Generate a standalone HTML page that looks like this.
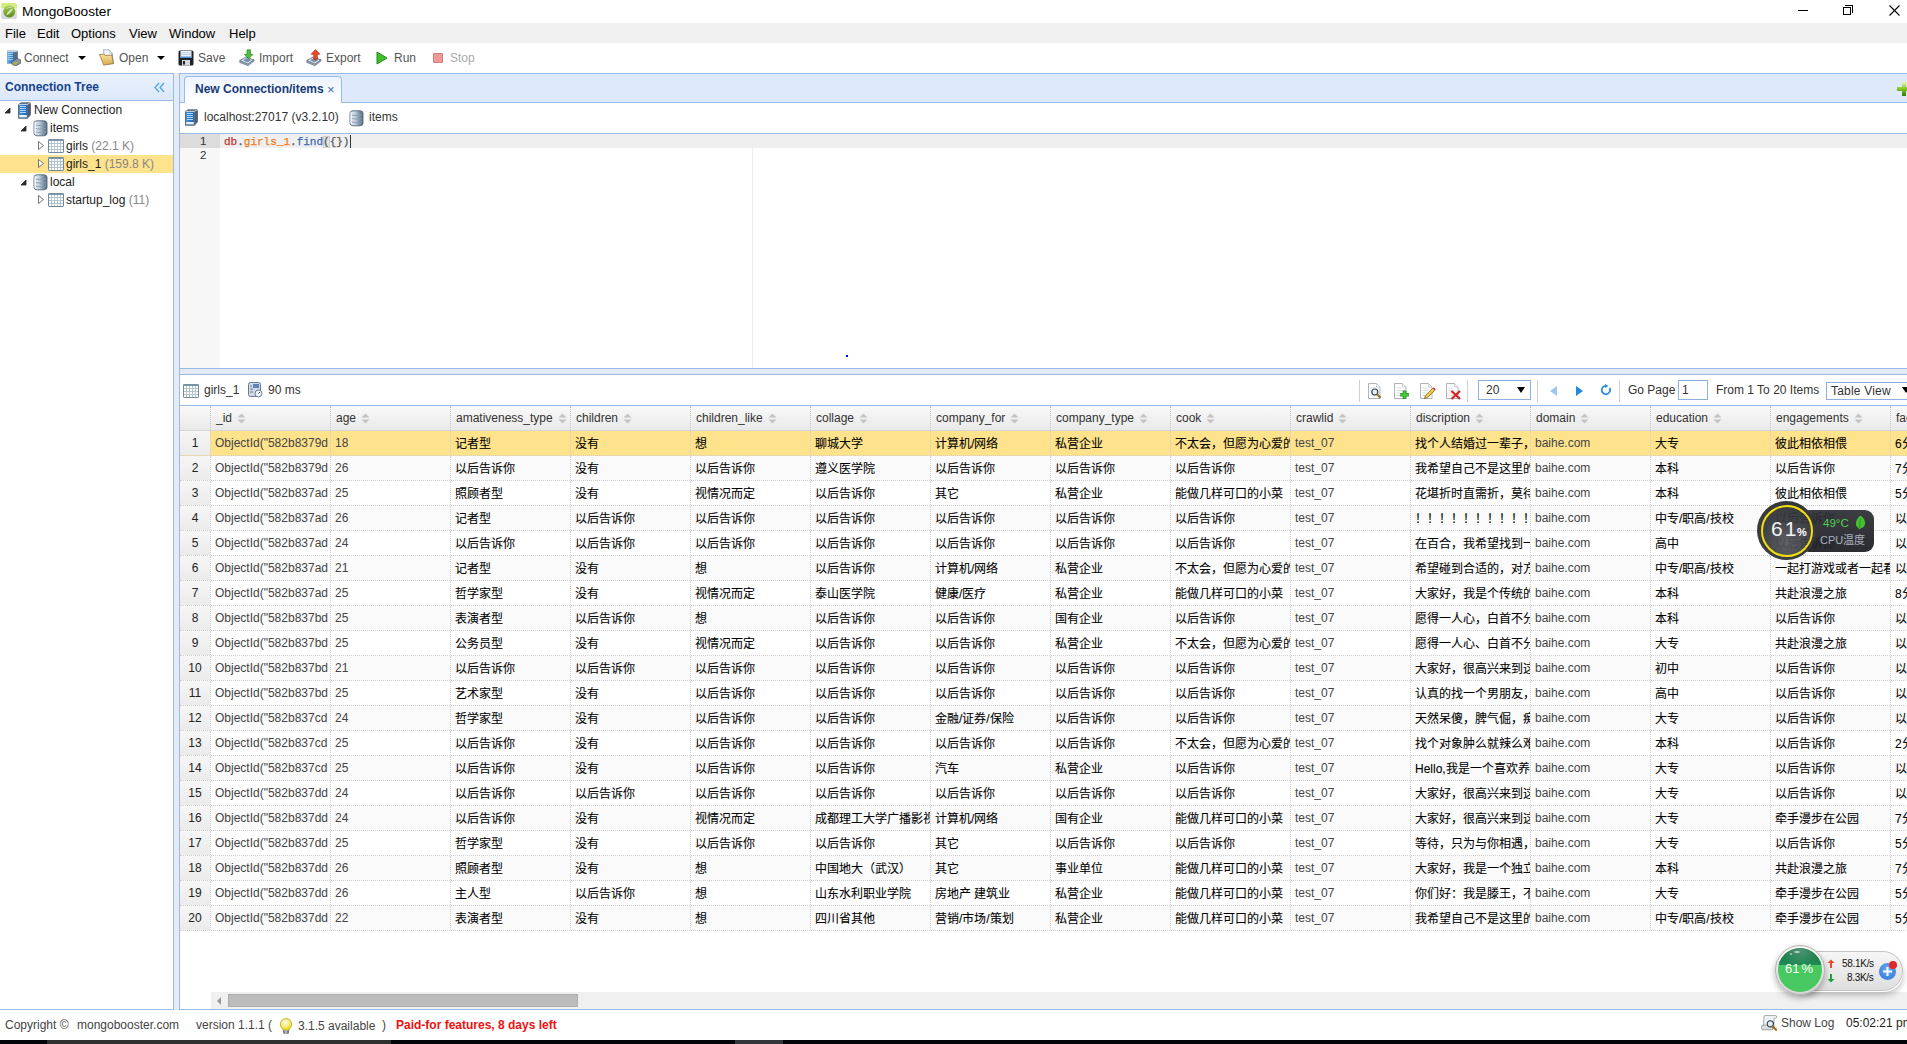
<!DOCTYPE html>
<html lang="zh-CN"><head><meta charset="utf-8"><style>
*{box-sizing:border-box}
html,body{margin:0;padding:0}
body{width:1907px;height:1044px;overflow:hidden;position:relative;background:#fff;font-family:"Liberation Sans",sans-serif;font-size:12px;color:#333}
.a{position:absolute}
.t{position:absolute;white-space:nowrap;line-height:14px}
/* title */
#title{left:0;top:0;width:1907px;height:23px;background:#fff}
#menu{left:0;top:23px;width:1907px;height:20px;background:#f0f0f0}
#menu .t{font-size:13px;color:#000;top:4px}
#tool{left:0;top:43px;width:1907px;height:30px;background:#fff}
#tool .t{top:8px;color:#555}
/* left panel */
#lp{left:0;top:73px;width:174px;height:937px;border-top:1px solid #99bbe8;border-right:1px solid #99bbe8;border-bottom:1px solid #99bbe8;background:#fff}
#lph{left:0;top:0;width:173px;height:27px;background:linear-gradient(#eaf1fc,#dde8f9);border-bottom:1px solid #99bbe8}
#split1{left:174px;top:73px;width:5px;height:937px;background:#e4ebf5}
#rp{left:179px;top:73px;width:1728px;height:937px;border-top:1px solid #99bbe8;border-left:1px solid #99bbe8;border-bottom:1px solid #99bbe8;background:#fff}
.tree .t{color:#222}
.gray{color:#888}
/* tab bar */
#tabbar{left:0;top:0;width:1728px;height:29px;background:#deeafb;border-bottom:1px solid #99bbe8}
#tab{left:4px;top:2px;width:158px;height:27px;border:1px solid #99bbe8;border-bottom:none;border-radius:4px 4px 0 0;background:linear-gradient(#eef4fd,#fff)}
#info{left:0;top:29px;width:1728px;height:31px;border-bottom:1px solid #99bbe8;background:#fff}
#editor{left:0;top:60px;width:1728px;height:235px;background:#fff;border-bottom:1px solid #99bbe8}
#split2{left:0;top:295px;width:1728px;height:6px;background:#e4ebf5;border-bottom:1px solid #99bbe8}
#rtool{left:0;top:301px;width:1728px;height:31px;background:#fff;border-bottom:1px solid #99bbe8}
.sep{position:absolute;top:6px;width:1px;height:22px;background:#d0d0d0}
/* grid */
#grid{position:absolute;left:0;top:332px;width:1728px;height:500px}
.hdr{position:absolute;left:0;top:0;width:1728px;height:25px;background:linear-gradient(#f9f9f9,#e9e9e9);border-bottom:1px solid #d5d5d5}
.hrn{position:absolute;left:0;top:0;width:30px;height:24px}
.hc{position:absolute;top:0;width:120px;height:24px;border-left:1px dotted #c5c5c5}
.ht{position:absolute;left:5px;top:5px;color:#333;line-height:14px;white-space:nowrap}
.sa{position:absolute;top:7px;width:9px;height:11px}
.row{position:absolute;left:0;width:1728px;height:25px;background:#fff;border-bottom:1px dotted #cfcfcf}
.row.alt{background:#fafafa}
.row.sel{background:#fee28c}
.rn{position:absolute;left:0;top:0;width:30px;height:24px;background:linear-gradient(#f6f6f6,#ebebeb);text-align:center;line-height:25px;color:#222}
.c{position:absolute;top:0;width:120px;height:24px;overflow:hidden;white-space:nowrap;padding-left:4px;line-height:24px;border-left:1px dotted #cfcfcf;color:#444}
.c.z{color:#000;-webkit-text-stroke:0.08px #000;line-height:26px}
#hscroll{left:31px;top:918px;width:1697px;height:17px;background:#f0f0f0}
#status{left:0;top:1010px;width:1907px;height:30px;background:#fff}
#status .t{top:8px;color:#444}
#taskbar{left:0;top:1040px;width:1907px;height:4px;background:#02040a}

</style></head><body>
<div id="title" class="a">
  <svg class="a" style="left:1px;top:3px" width="17" height="17" viewBox="0 0 17 17"><defs><linearGradient id="gi0" x1="0" y1="0" x2="0" y2="1"><stop offset="0" stop-color="#fafafa"/><stop offset="1" stop-color="#d4d4d8"/></linearGradient><linearGradient id="gi1" x1="0" y1="0" x2="0" y2="1"><stop offset="0" stop-color="#a8d050"/><stop offset="1" stop-color="#5a8a1e"/></linearGradient></defs><rect x="0" y="0" width="16" height="16" rx="2.5" fill="url(#gi0)"/><path d="M0 2.5Q0 0 2.5 0h11Q16 0 16 2.5V5H0z" fill="#d2ec84"/><circle cx="8.3" cy="8.5" r="6" fill="url(#gi1)"/><path d="M5 12.5L6.5 9.5Q9 6 12 5.5Q11 8.5 8 11z" fill="#e6f2d0" opacity="0.85"/><path d="M5.5 5.5q2-1.5 5-1" stroke="#e6f2d0" stroke-width="0.6" fill="none"/></svg>
  <div class="t" style="left:22px;top:5px;font-size:13.7px;color:#000">MongoBooster</div>
  <div class="a" style="left:1798px;top:10px;width:10px;height:1px;background:#000"></div>
  <div class="a" style="left:1843px;top:7px;width:8px;height:8px;border:1px solid #000"></div>
  <div class="a" style="left:1845px;top:5px;width:8px;height:8px;border-top:1px solid #000;border-right:1px solid #000"></div>
  <svg class="a" style="left:1889px;top:5px" width="11" height="11" viewBox="0 0 11 11"><path d="M0.5 0.5L10.5 10.5M10.5 0.5L0.5 10.5" stroke="#000" stroke-width="1.1"/></svg>
</div>
<div id="menu" class="a">
  <div class="t" style="left:5px">File</div>
  <div class="t" style="left:37px">Edit</div>
  <div class="t" style="left:71px">Options</div>
  <div class="t" style="left:129px">View</div>
  <div class="t" style="left:169px">Window</div>
  <div class="t" style="left:229px">Help</div>
</div>
<div id="tool" class="a">
  <!-- connect icon -->
  <svg class="a" style="left:6px;top:6px" width="15" height="17" viewBox="0 0 15 17"><defs><linearGradient id="cg1" x1="0" x2="1"><stop offset="0" stop-color="#7fb6e8"/><stop offset="0.6" stop-color="#2f86d6"/><stop offset="1" stop-color="#3a6ea8"/></linearGradient></defs><path d="M1 2.5Q1 1 3 1h6q3 0 3 2v11.5H1z" fill="#8696a8"/><rect x="1" y="2" width="7" height="12.5" fill="url(#cg1)"/><path d="M8 2h3.5v12.5H8z" fill="#596a80"/><ellipse cx="6.3" cy="2" rx="5.3" ry="1.2" fill="#c8d2dc"/><path d="M2 4.5h5M2 6.5h5M2 8.5h5M2 10.5h5" stroke="#cfe6ff" stroke-width="0.7"/><path d="M6 12.5l5-3 4 1.5v3l-5 3-4-1.5z" fill="#8a949e" stroke="#4a525a" stroke-width="0.6"/><path d="M7 15.5l2-2.5M9 15.5l2-2.5" stroke="#e0c000" stroke-width="1"/></svg>
  <div class="t" style="left:24px">Connect</div>
  <div class="a" style="left:78px;top:13px;width:0;height:0;border-left:4px solid transparent;border-right:4px solid transparent;border-top:4px solid #000"></div>
  <!-- open icon -->
  <svg class="a" style="left:99px;top:6px" width="16" height="17" viewBox="0 0 16 17"><defs><linearGradient id="fo" x1="0" y1="0" x2="0" y2="1"><stop offset="0" stop-color="#fbe6a0"/><stop offset="1" stop-color="#d8a848"/></linearGradient></defs><path d="M4.5 0.8h5.5l3.2 3.4 1 10.5-8 0.5z" fill="#f4f8fc" stroke="#8ca4bc" stroke-width="0.8"/><path d="M10 0.8l0.5 3.6 2.7-0.2" fill="none" stroke="#a8bcd0" stroke-width="0.6"/><path d="M12.8 4.5l1.5 10.5" stroke="#6a9ad0" stroke-width="0.8"/><path d="M0.6 5.5l4.2-0.3 1.3 1.2 6.8-0.2 1.4 8.3-9.6 1.6z" fill="url(#fo)" stroke="#9a7434" stroke-width="0.8" stroke-linejoin="round"/></svg>
  <div class="t" style="left:119px">Open</div>
  <div class="a" style="left:157px;top:13px;width:0;height:0;border-left:4px solid transparent;border-right:4px solid transparent;border-top:4px solid #000"></div>
  <!-- save -->
  <svg class="a" style="left:178px;top:7px" width="16" height="16" viewBox="0 0 16 16"><rect x="0.5" y="0.5" width="15" height="15" rx="1.5" fill="#1e2226"/><rect x="2.5" y="1" width="11" height="7" fill="#f2f6fa"/><path d="M3 2.8h10M3 4.6h10" stroke="#a8c4e4" stroke-width="0.8"/><rect x="2.5" y="6.5" width="11" height="1.5" fill="#4a90d8"/><rect x="4" y="10" width="8" height="5.5" fill="#d4d8dc"/><rect x="5" y="11" width="2" height="3.5" fill="#1e2226"/></svg>
  <div class="t" style="left:198px">Save</div>
  <!-- import -->
  <svg class="a" style="left:239px;top:6px" width="16" height="18" viewBox="0 0 16 18"><path d="M0.8 11.5L7 8l8 3-6 4.5z" fill="#dfe8f0" stroke="#5a6878" stroke-width="0.8" stroke-linejoin="round"/><path d="M0.8 11.5v2l8.2 3.2 6-4.7v-1.5l-6 4.5z" fill="#9aa8b6" stroke="#5a6878" stroke-width="0.6" stroke-linejoin="round"/><path d="M4 11.3l4-2.2 4.5 1.6-3.8 2.8z" fill="#7890a8"/><path d="M8 0.8h3.5v4.5h2.5l-4.3 4.5-4.3-4.5H8z" fill="#48c040" stroke="#2a8a20" stroke-width="0.7"/></svg>
  <div class="t" style="left:259px">Import</div>
  <!-- export -->
  <svg class="a" style="left:306px;top:6px" width="16" height="18" viewBox="0 0 16 18"><path d="M0.8 11.5L7 8l8 3-6 4.5z" fill="#dfe8f0" stroke="#5a6878" stroke-width="0.8" stroke-linejoin="round"/><path d="M0.8 11.5v2l8.2 3.2 6-4.7v-1.5l-6 4.5z" fill="#9aa8b6" stroke="#5a6878" stroke-width="0.6" stroke-linejoin="round"/><path d="M4 11.3l4-2.2 4.5 1.6-3.8 2.8z" fill="#7890a8"/><path d="M9.5 0.6l4.3 4.6h-2.5v5H7.8v-5H5.2z" fill="#f04a2a" stroke="#a82010" stroke-width="0.7"/></svg>
  <div class="t" style="left:326px">Export</div>
  <!-- run -->
  <svg class="a" style="left:376px;top:8px" width="12" height="14" viewBox="0 0 12 14"><path d="M1 1L11 7L1 13Z" fill="#3fbf2a" stroke="#238a15" stroke-width="1" stroke-linejoin="round"/></svg>
  <div class="t" style="left:394px">Run</div>
  <!-- stop -->
  <div class="a" style="left:433px;top:10px;width:10px;height:10px;background:#ef9a9a;border:1px solid #d97a7a;border-radius:1px"></div>
  <div class="t" style="left:450px;color:#aaa">Stop</div>
</div>

<div id="lp" class="a">
  <div id="lph" class="a">
    <div class="t" style="left:5px;top:6px;font-weight:bold;color:#15428b">Connection Tree</div>
    <svg class="a" style="left:154px;top:8px" width="11" height="11" viewBox="0 0 11 11"><path d="M5 1L1 5.5L5 10M10 1L6 5.5L10 10" fill="none" stroke="#4aa3ea" stroke-width="1.3"/></svg>
  </div>
  <div class="tree">
    <!-- New Connection row y=101..119 -->
    <svg class="a" style="left:4px;top:33px" width="7" height="7" viewBox="0 0 7 7"><path d="M6 1L6 6L1 6Z" fill="#2a2a2a" stroke="#2a2a2a" stroke-width="0.8" stroke-linejoin="round"/></svg>
    <svg class="a" style="left:18px;top:28px" width="13" height="17" viewBox="0 0 13 17"><defs><linearGradient id="sfr" x1="0" x2="1"><stop offset="0" stop-color="#3d95e0"/><stop offset="1" stop-color="#1a64b4"/></linearGradient></defs><path d="M0.5 2.5L3 0.8h9l0.5 1.5v10.5l-3 3.5H0.5z" fill="#6c7c90" stroke="#3d4a5a" stroke-width="0.7"/><path d="M0.8 2.5h8.5l3-1.7" fill="none" stroke="#c8d0d8" stroke-width="1"/><rect x="1.2" y="3" width="7.6" height="12.3" fill="url(#sfr)"/><path d="M2 4.5h6M2 6.5h6M2 8.5h6M2 10.5h6" stroke="#a8d8ff" stroke-width="1"/><rect x="1.2" y="13" width="7.6" height="2.3" fill="#e8f0f8"/><path d="M9.5 3.2l2.5-2v11.5l-2.5 3z" fill="#4d5c70"/></svg>
    <div class="t" style="left:34px;top:29px">New Connection</div>
    <!-- items -->
    <svg class="a" style="left:20px;top:51px" width="7" height="7" viewBox="0 0 7 7"><path d="M6 1L6 6L1 6Z" fill="#2a2a2a" stroke="#2a2a2a" stroke-width="0.8" stroke-linejoin="round"/></svg>
    <svg class="a" style="left:33px;top:46px" width="15" height="17" viewBox="0 0 15 17"><defs><linearGradient id="dbg" x1="0" x2="1"><stop offset="0" stop-color="#e6f0f8"/><stop offset="0.35" stop-color="#c8d6e2"/><stop offset="0.75" stop-color="#7890a4"/><stop offset="1" stop-color="#5a6e80"/></linearGradient></defs><path d="M1 3Q1 1 4 0.8h7Q14 1 14 3v10.5q0 2-3 2.3H4q-3-0.3-3-2.3z" fill="url(#dbg)" stroke="#56687a" stroke-width="0.9"/><path d="M2 5q5 1.2 11 0M2 8.5q5 1.2 11 0M2 12q5 1.2 11 0" fill="none" stroke="#8a9cac" stroke-width="0.9"/><path d="M2.2 2.5v11" stroke="#f4f9fd" stroke-width="1.6" opacity="0.8"/></svg>
    <div class="t" style="left:50px;top:47px">items</div>
    <!-- girls -->
    <svg class="a" style="left:38px;top:67px" width="6" height="9" viewBox="0 0 6 9"><path d="M0.5 0.5L5.5 4.5L0.5 8.5Z" fill="#fff" stroke="#666" stroke-width="0.9"/></svg>
    <svg class="a" style="left:48px;top:65px" width="16" height="14" viewBox="0 0 16 14"><rect x="0" y="0" width="16" height="14" rx="1" fill="#b4c4d0"/><rect x="0.5" y="0.5" width="15" height="13" rx="1" fill="none" stroke="#71899b"/><rect x="0.5" y="0.5" width="15" height="1.5" fill="#7d95a8"/><rect x="1" y="2" width="2" height="2" fill="#fff"/><rect x="4" y="2" width="2" height="2" fill="#fff"/><rect x="7" y="2" width="2" height="2" fill="#fff"/><rect x="10" y="2" width="2" height="2" fill="#fff"/><rect x="13" y="2" width="2" height="2" fill="#fff"/><rect x="1" y="5" width="2" height="2" fill="#fff"/><rect x="4" y="5" width="2" height="2" fill="#fff"/><rect x="7" y="5" width="2" height="2" fill="#fff"/><rect x="10" y="5" width="2" height="2" fill="#fff"/><rect x="13" y="5" width="2" height="2" fill="#fff"/><rect x="1" y="8" width="2" height="2" fill="#fff"/><rect x="4" y="8" width="2" height="2" fill="#fff"/><rect x="7" y="8" width="2" height="2" fill="#fff"/><rect x="10" y="8" width="2" height="2" fill="#fff"/><rect x="13" y="8" width="2" height="2" fill="#fff"/><rect x="1" y="11" width="2" height="2" fill="#fff"/><rect x="4" y="11" width="2" height="2" fill="#fff"/><rect x="7" y="11" width="2" height="2" fill="#fff"/><rect x="10" y="11" width="2" height="2" fill="#fff"/><rect x="13" y="11" width="2" height="2" fill="#fff"/></svg>
    <div class="t" style="left:66px;top:65px">girls <span class="gray">(22.1 K)</span></div>
    <!-- girls_1 selected -->
    <div class="a" style="left:0;top:81px;width:173px;height:18px;background:#fee28c"></div>
    <svg class="a" style="left:38px;top:85px" width="6" height="9" viewBox="0 0 6 9"><path d="M0.5 0.5L5.5 4.5L0.5 8.5Z" fill="#fff" stroke="#666" stroke-width="0.9"/></svg>
    <svg class="a" style="left:48px;top:83px" width="16" height="14" viewBox="0 0 16 14"><rect x="0" y="0" width="16" height="14" rx="1" fill="#b4c4d0"/><rect x="0.5" y="0.5" width="15" height="13" rx="1" fill="none" stroke="#71899b"/><rect x="0.5" y="0.5" width="15" height="1.5" fill="#7d95a8"/><rect x="1" y="2" width="2" height="2" fill="#fff"/><rect x="4" y="2" width="2" height="2" fill="#fff"/><rect x="7" y="2" width="2" height="2" fill="#fff"/><rect x="10" y="2" width="2" height="2" fill="#fff"/><rect x="13" y="2" width="2" height="2" fill="#fff"/><rect x="1" y="5" width="2" height="2" fill="#fff"/><rect x="4" y="5" width="2" height="2" fill="#fff"/><rect x="7" y="5" width="2" height="2" fill="#fff"/><rect x="10" y="5" width="2" height="2" fill="#fff"/><rect x="13" y="5" width="2" height="2" fill="#fff"/><rect x="1" y="8" width="2" height="2" fill="#fff"/><rect x="4" y="8" width="2" height="2" fill="#fff"/><rect x="7" y="8" width="2" height="2" fill="#fff"/><rect x="10" y="8" width="2" height="2" fill="#fff"/><rect x="13" y="8" width="2" height="2" fill="#fff"/><rect x="1" y="11" width="2" height="2" fill="#fff"/><rect x="4" y="11" width="2" height="2" fill="#fff"/><rect x="7" y="11" width="2" height="2" fill="#fff"/><rect x="10" y="11" width="2" height="2" fill="#fff"/><rect x="13" y="11" width="2" height="2" fill="#fff"/></svg>
    <div class="t" style="left:66px;top:83px">girls_1 <span class="gray">(159.8 K)</span></div>
    <!-- local -->
    <svg class="a" style="left:20px;top:105px" width="7" height="7" viewBox="0 0 7 7"><path d="M6 1L6 6L1 6Z" fill="#2a2a2a" stroke="#2a2a2a" stroke-width="0.8" stroke-linejoin="round"/></svg>
    <svg class="a" style="left:33px;top:100px" width="15" height="17" viewBox="0 0 15 17"><path d="M1 3Q1 1 4 0.8h7Q14 1 14 3v10.5q0 2-3 2.3H4q-3-0.3-3-2.3z" fill="url(#dbg)" stroke="#56687a" stroke-width="0.9"/><path d="M2 5q5 1.2 11 0M2 8.5q5 1.2 11 0M2 12q5 1.2 11 0" fill="none" stroke="#8a9cac" stroke-width="0.9"/><path d="M2.2 2.5v11" stroke="#f4f9fd" stroke-width="1.6" opacity="0.8"/></svg>
    <div class="t" style="left:50px;top:101px">local</div>
    <!-- startup_log -->
    <svg class="a" style="left:38px;top:121px" width="6" height="9" viewBox="0 0 6 9"><path d="M0.5 0.5L5.5 4.5L0.5 8.5Z" fill="#fff" stroke="#666" stroke-width="0.9"/></svg>
    <svg class="a" style="left:48px;top:119px" width="16" height="14" viewBox="0 0 16 14"><rect x="0" y="0" width="16" height="14" rx="1" fill="#b4c4d0"/><rect x="0.5" y="0.5" width="15" height="13" rx="1" fill="none" stroke="#71899b"/><rect x="0.5" y="0.5" width="15" height="1.5" fill="#7d95a8"/><rect x="1" y="2" width="2" height="2" fill="#fff"/><rect x="4" y="2" width="2" height="2" fill="#fff"/><rect x="7" y="2" width="2" height="2" fill="#fff"/><rect x="10" y="2" width="2" height="2" fill="#fff"/><rect x="13" y="2" width="2" height="2" fill="#fff"/><rect x="1" y="5" width="2" height="2" fill="#fff"/><rect x="4" y="5" width="2" height="2" fill="#fff"/><rect x="7" y="5" width="2" height="2" fill="#fff"/><rect x="10" y="5" width="2" height="2" fill="#fff"/><rect x="13" y="5" width="2" height="2" fill="#fff"/><rect x="1" y="8" width="2" height="2" fill="#fff"/><rect x="4" y="8" width="2" height="2" fill="#fff"/><rect x="7" y="8" width="2" height="2" fill="#fff"/><rect x="10" y="8" width="2" height="2" fill="#fff"/><rect x="13" y="8" width="2" height="2" fill="#fff"/><rect x="1" y="11" width="2" height="2" fill="#fff"/><rect x="4" y="11" width="2" height="2" fill="#fff"/><rect x="7" y="11" width="2" height="2" fill="#fff"/><rect x="10" y="11" width="2" height="2" fill="#fff"/><rect x="13" y="11" width="2" height="2" fill="#fff"/></svg>
    <div class="t" style="left:66px;top:119px">startup_log <span class="gray">(11)</span></div>
  </div>
</div>
<div id="split1" class="a"></div>

<div id="rp" class="a">
  <div id="tabbar" class="a">
    <div id="tab" class="a">
      <div class="t" style="left:10px;top:5px;font-weight:bold;color:#163a78">New Connection/items</div>
      <div class="t" style="left:142px;top:6px;color:#3a6db0;font-size:13px">×</div>
    </div>
    <svg class="a" style="left:1717px;top:8px" width="11" height="14" viewBox="0 0 11 14"><defs><linearGradient id="pg" x1="0" y1="0" x2="0" y2="1"><stop offset="0" stop-color="#e6fca8"/><stop offset="0.45" stop-color="#8cc828"/><stop offset="1" stop-color="#2a8000"/></linearGradient></defs><path d="M5 0h4v5h2v4H9v5H5V9H0V5h5z" fill="url(#pg)"/></svg>
  </div>
  <div id="info" class="a">
    <svg class="a" style="left:5px;top:6px" width="13" height="17" viewBox="0 0 13 17"><defs><linearGradient id="sfr2" x1="0" x2="1"><stop offset="0" stop-color="#3d95e0"/><stop offset="1" stop-color="#1a64b4"/></linearGradient></defs><path d="M0.5 2.5L3 0.8h9l0.5 1.5v10.5l-3 3.5H0.5z" fill="#6c7c90" stroke="#3d4a5a" stroke-width="0.7"/><path d="M0.8 2.5h8.5l3-1.7" fill="none" stroke="#c8d0d8" stroke-width="1"/><rect x="1.2" y="3" width="7.6" height="12.3" fill="url(#sfr2)"/><path d="M2 4.5h6M2 6.5h6M2 8.5h6M2 10.5h6" stroke="#a8d8ff" stroke-width="1"/><rect x="1.2" y="13" width="7.6" height="2.3" fill="#e8f0f8"/><path d="M9.5 3.2l2.5-2v11.5l-2.5 3z" fill="#4d5c70"/></svg>
    <div class="t" style="left:24px;top:7px">localhost:27017 (v3.2.10)</div>
    <svg class="a" style="left:169px;top:7px" width="15" height="17" viewBox="0 0 15 17"><path d="M1 3Q1 1 4 0.8h7Q14 1 14 3v10.5q0 2-3 2.3H4q-3-0.3-3-2.3z" fill="url(#dbg)" stroke="#56687a" stroke-width="0.9"/><path d="M2 5q5 1.2 11 0M2 8.5q5 1.2 11 0M2 12q5 1.2 11 0" fill="none" stroke="#8a9cac" stroke-width="0.9"/><path d="M2.2 2.5v11" stroke="#f4f9fd" stroke-width="1.6" opacity="0.8"/></svg>
    <div class="t" style="left:189px;top:7px">items</div>
  </div>
  <div id="editor" class="a">
    <div class="a" style="left:0;top:0;width:40px;height:234px;background:#f7f7f7"></div>
    <div class="a" style="left:0;top:0;width:40px;height:14px;background:#dcdcdc"></div>
    <div class="a" style="left:40px;top:0;width:1688px;height:14px;background:#efefef"></div>
    <div class="a" style="left:572px;top:14px;width:1px;height:220px;background:#ececec"></div>
    <div class="t" style="left:20px;top:0;font-family:'Liberation Sans';font-size:11.5px;color:#333;line-height:14px">1</div>
    <div class="t" style="left:20px;top:14px;font-family:'Liberation Sans';font-size:11.5px;color:#333;line-height:14px">2</div>
    <div class="t" style="left:44px;top:1px;font-family:'Liberation Mono',monospace;font-size:11px;line-height:14px;color:#555;-webkit-text-stroke:0.25px currentColor"><span style="color:#c83232">db</span>.<span style="color:#ef7d1e">girls_1</span>.<span style="color:#3669b5">find</span><span style="outline:1px solid #ccc;outline-offset:-1px;background:#e4e4e4">(</span>{})</div>
    <div class="a" style="left:170px;top:1px;width:1px;height:13px;background:#333"></div>
    <div class="a" style="left:666px;top:221px;width:2px;height:2px;background:#0000ee"></div>
  </div>
  <div id="split2" class="a"></div>
  <div id="rtool" class="a">
        <svg class="a" style="left:3px;top:9px" width="16" height="14" viewBox="0 0 16 14"><rect x="0" y="0" width="16" height="14" rx="1" fill="#b4c4d0"/><rect x="0.5" y="0.5" width="15" height="13" rx="1" fill="none" stroke="#71899b"/><rect x="0.5" y="0.5" width="15" height="1.5" fill="#7d95a8"/><rect x="1" y="2" width="2" height="2" fill="#fff"/><rect x="4" y="2" width="2" height="2" fill="#fff"/><rect x="7" y="2" width="2" height="2" fill="#fff"/><rect x="10" y="2" width="2" height="2" fill="#fff"/><rect x="13" y="2" width="2" height="2" fill="#fff"/><rect x="1" y="5" width="2" height="2" fill="#fff"/><rect x="4" y="5" width="2" height="2" fill="#fff"/><rect x="7" y="5" width="2" height="2" fill="#fff"/><rect x="10" y="5" width="2" height="2" fill="#fff"/><rect x="13" y="5" width="2" height="2" fill="#fff"/><rect x="1" y="8" width="2" height="2" fill="#fff"/><rect x="4" y="8" width="2" height="2" fill="#fff"/><rect x="7" y="8" width="2" height="2" fill="#fff"/><rect x="10" y="8" width="2" height="2" fill="#fff"/><rect x="13" y="8" width="2" height="2" fill="#fff"/><rect x="1" y="11" width="2" height="2" fill="#fff"/><rect x="4" y="11" width="2" height="2" fill="#fff"/><rect x="7" y="11" width="2" height="2" fill="#fff"/><rect x="10" y="11" width="2" height="2" fill="#fff"/><rect x="13" y="11" width="2" height="2" fill="#fff"/></svg>
    <div class="t" style="left:24px;top:8px">girls_1</div>
    <svg class="a" style="left:68px;top:7px" width="15" height="16" viewBox="0 0 15 16"><rect x="0.5" y="0.5" width="12" height="14" rx="2" fill="#d0dae6" stroke="#6a7a8c"/><rect x="5" y="2" width="6" height="4" fill="#5a84b8"/><path d="M2 4h2M2 7h3M2 10h3" stroke="#6a7a8c"/><circle cx="10.5" cy="11.5" r="3.5" fill="#eef2f6" stroke="#6a7a8c"/><path d="M10.5 11.5l1.5-1.5" stroke="#333"/></svg>
    <div class="t" style="left:88px;top:8px">90 ms</div>
    <div class="sep" style="left:1179px;top:5px"></div>
    <svg class="a" style="left:1188px;top:8px" width="18" height="17" viewBox="0 0 18 17"><path d="M0.5 0.5h8l3.5 3.5v11.5H0.5z" fill="#fff" stroke="#a4acb4" stroke-width="0.9"/><path d="M8.5 0.5v3.5h3.5" fill="#f0f0f0" stroke="#b8c0c8" stroke-width="0.7"/><path d="M2.5 5h5M2.5 7.5h6M2.5 10h4M2.5 12.5h5" stroke="#d8d8d8" stroke-width="0.9"/><circle cx="6.8" cy="9" r="3" fill="#e4f0fc" stroke="#3a4048" stroke-width="1.2"/><path d="M9 11.3l3.6 3.6" stroke="#a07830" stroke-width="2.2"/></svg>
    <svg class="a" style="left:1214px;top:8px" width="18" height="17" viewBox="0 0 18 17"><path d="M0.5 0.5h8l3.5 3.5v11.5H0.5z" fill="#fff" stroke="#a4acb4" stroke-width="0.9"/><path d="M8.5 0.5v3.5h3.5" fill="#f0f0f0" stroke="#b8c0c8" stroke-width="0.7"/><path d="M2.5 5h5M2.5 7.5h6M2.5 10h4M2.5 12.5h5" stroke="#d8d8d8" stroke-width="0.9"/><path d="M10.5 7.5v8.5M6.3 11.8h8.5" stroke="#1e8a1e" stroke-width="3.6"/><path d="M10.5 8.3v7M7.1 11.8h7" stroke="#4cd03a" stroke-width="2"/></svg>
    <svg class="a" style="left:1240px;top:8px" width="18" height="17" viewBox="0 0 18 17"><path d="M0.5 0.5h8l3.5 3.5v11.5H0.5z" fill="#fff" stroke="#a4acb4" stroke-width="0.9"/><path d="M8.5 0.5v3.5h3.5" fill="#f0f0f0" stroke="#b8c0c8" stroke-width="0.7"/><path d="M2.5 5h5M2.5 7.5h6M2.5 10h4M2.5 12.5h5" stroke="#d8d8d8" stroke-width="0.9"/><path d="M4.5 15.5l0.8-2.8 7.5-7.5 2 2-7.5 7.5z" fill="#f0cc3a" stroke="#6a5210" stroke-width="0.7"/><path d="M12.8 5.2l1-1 2 2-1 1z" fill="#d83030"/></svg>
    <svg class="a" style="left:1266px;top:8px" width="18" height="17" viewBox="0 0 18 17"><path d="M0.5 0.5h8l3.5 3.5v11.5H0.5z" fill="#fff" stroke="#a4acb4" stroke-width="0.9"/><path d="M8.5 0.5v3.5h3.5" fill="#f0f0f0" stroke="#b8c0c8" stroke-width="0.7"/><path d="M2.5 5h5M2.5 7.5h6M2.5 10h4M2.5 12.5h5" stroke="#d8d8d8" stroke-width="0.9"/><path d="M5.5 8l8.5 8M14 8l-8.5 8" stroke="#d42020" stroke-width="2.2"/></svg>
    <div class="sep" style="left:1287px;top:5px"></div>
    <div class="a" style="left:1298px;top:5px;width:53px;height:20px;border:1px solid #8eb0e0;background:#fff"></div>
    <div class="t" style="left:1306px;top:8px;font-size:12px">20</div>
    <div class="a" style="left:1337px;top:12px;width:0;height:0;border-left:4px solid transparent;border-right:4px solid transparent;border-top:6px solid #000"></div>
    <div class="sep" style="left:1357px;top:5px"></div>
    <div class="a" style="left:1370px;top:11px;width:0;height:0;border-top:5px solid transparent;border-bottom:5px solid transparent;border-right:7px solid #9cc8f0"></div>
    <div class="a" style="left:1396px;top:11px;width:0;height:0;border-top:5px solid transparent;border-bottom:5px solid transparent;border-left:7px solid #1f8ae0"></div>
    <svg class="a" style="left:1420px;top:9px" width="12" height="12" viewBox="0 0 12 12"><path d="M9.6 4A4.2 4.2 0 1 1 6 1.8" fill="none" stroke="#2a8ae0" stroke-width="1.8"/><path d="M5 0l3.5 2-3.5 2z" fill="#2a8ae0"/></svg>
    <div class="sep" style="left:1439px;top:5px"></div>
    <div class="t" style="left:1448px;top:8px">Go Page</div>
    <div class="a" style="left:1498px;top:5px;width:30px;height:20px;border:1px solid #8eb0e0;background:#fff"></div>
    <div class="t" style="left:1502px;top:8px">1</div>
    <div class="t" style="left:1536px;top:8px">From 1 To 20 Items</div>
    <div class="a" style="left:1646px;top:7px;width:90px;height:18px;border:1px solid #8eb0e0;background:#fff"></div>
    <div class="t" style="left:1651px;top:9px;letter-spacing:0.2px">Table View</div>
    <div class="a" style="left:1722px;top:12px;width:0;height:0;border-left:4px solid transparent;border-right:4px solid transparent;border-top:6px solid #000"></div>
  </div>
  <div id="grid">
<div class="hdr">
<div class="hrn"></div>
<div class="hc" style="left:30px"><span class="ht">_id</span><svg class="sa" style="left:26px" width="9" height="11" viewBox="0 0 9 11"><path d="M4.5 0.5L8.5 4.5H0.5z M4.5 10.5L8.5 6.5H0.5z" fill="#c4c4c4"/></svg></div>
<div class="hc" style="left:150px"><span class="ht">age</span><svg class="sa" style="left:30px" width="9" height="11" viewBox="0 0 9 11"><path d="M4.5 0.5L8.5 4.5H0.5z M4.5 10.5L8.5 6.5H0.5z" fill="#c4c4c4"/></svg></div>
<div class="hc" style="left:270px"><span class="ht">amativeness_type</span><svg class="sa" style="left:107px" width="9" height="11" viewBox="0 0 9 11"><path d="M4.5 0.5L8.5 4.5H0.5z M4.5 10.5L8.5 6.5H0.5z" fill="#c4c4c4"/></svg></div>
<div class="hc" style="left:390px"><span class="ht">children</span><svg class="sa" style="left:52px" width="9" height="11" viewBox="0 0 9 11"><path d="M4.5 0.5L8.5 4.5H0.5z M4.5 10.5L8.5 6.5H0.5z" fill="#c4c4c4"/></svg></div>
<div class="hc" style="left:510px"><span class="ht">children_like</span><svg class="sa" style="left:77px" width="9" height="11" viewBox="0 0 9 11"><path d="M4.5 0.5L8.5 4.5H0.5z M4.5 10.5L8.5 6.5H0.5z" fill="#c4c4c4"/></svg></div>
<div class="hc" style="left:630px"><span class="ht">collage</span><svg class="sa" style="left:48px" width="9" height="11" viewBox="0 0 9 11"><path d="M4.5 0.5L8.5 4.5H0.5z M4.5 10.5L8.5 6.5H0.5z" fill="#c4c4c4"/></svg></div>
<div class="hc" style="left:750px"><span class="ht">company_for</span><svg class="sa" style="left:79px" width="9" height="11" viewBox="0 0 9 11"><path d="M4.5 0.5L8.5 4.5H0.5z M4.5 10.5L8.5 6.5H0.5z" fill="#c4c4c4"/></svg></div>
<div class="hc" style="left:870px"><span class="ht">company_type</span><svg class="sa" style="left:88px" width="9" height="11" viewBox="0 0 9 11"><path d="M4.5 0.5L8.5 4.5H0.5z M4.5 10.5L8.5 6.5H0.5z" fill="#c4c4c4"/></svg></div>
<div class="hc" style="left:990px"><span class="ht">cook</span><svg class="sa" style="left:35px" width="9" height="11" viewBox="0 0 9 11"><path d="M4.5 0.5L8.5 4.5H0.5z M4.5 10.5L8.5 6.5H0.5z" fill="#c4c4c4"/></svg></div>
<div class="hc" style="left:1110px"><span class="ht">crawlid</span><svg class="sa" style="left:47px" width="9" height="11" viewBox="0 0 9 11"><path d="M4.5 0.5L8.5 4.5H0.5z M4.5 10.5L8.5 6.5H0.5z" fill="#c4c4c4"/></svg></div>
<div class="hc" style="left:1230px"><span class="ht">discription</span><svg class="sa" style="left:64px" width="9" height="11" viewBox="0 0 9 11"><path d="M4.5 0.5L8.5 4.5H0.5z M4.5 10.5L8.5 6.5H0.5z" fill="#c4c4c4"/></svg></div>
<div class="hc" style="left:1350px"><span class="ht">domain</span><svg class="sa" style="left:49px" width="9" height="11" viewBox="0 0 9 11"><path d="M4.5 0.5L8.5 4.5H0.5z M4.5 10.5L8.5 6.5H0.5z" fill="#c4c4c4"/></svg></div>
<div class="hc" style="left:1470px"><span class="ht">education</span><svg class="sa" style="left:62px" width="9" height="11" viewBox="0 0 9 11"><path d="M4.5 0.5L8.5 4.5H0.5z M4.5 10.5L8.5 6.5H0.5z" fill="#c4c4c4"/></svg></div>
<div class="hc" style="left:1590px"><span class="ht">engagements</span><svg class="sa" style="left:83px" width="9" height="11" viewBox="0 0 9 11"><path d="M4.5 0.5L8.5 4.5H0.5z M4.5 10.5L8.5 6.5H0.5z" fill="#c4c4c4"/></svg></div>
<div class="hc" style="left:1710px"><span class="ht">face</span><svg class="sa" style="left:33px" width="9" height="11" viewBox="0 0 9 11"><path d="M4.5 0.5L8.5 4.5H0.5z M4.5 10.5L8.5 6.5H0.5z" fill="#c4c4c4"/></svg></div>
</div>
<div class="row sel" style="top:25px"><div class="rn">1</div>
<div class="c" style="left:30px">ObjectId(&quot;582b8379d</div>
<div class="c" style="left:150px">18</div>
<div class="c z" style="left:270px">记者型</div>
<div class="c z" style="left:390px">没有</div>
<div class="c z" style="left:510px">想</div>
<div class="c z" style="left:630px">聊城大学</div>
<div class="c z" style="left:750px">计算机/网络</div>
<div class="c z" style="left:870px">私营企业</div>
<div class="c z" style="left:990px">不太会，但愿为心爱的</div>
<div class="c" style="left:1110px">test_07</div>
<div class="c z" style="left:1230px">找个人结婚过一辈子，</div>
<div class="c" style="left:1350px">baihe.com</div>
<div class="c z" style="left:1470px">大专</div>
<div class="c z" style="left:1590px">彼此相依相偎</div>
<div class="c z" style="left:1710px">6分</div>
</div>
<div class="row alt" style="top:50px"><div class="rn">2</div>
<div class="c" style="left:30px">ObjectId(&quot;582b8379d</div>
<div class="c" style="left:150px">26</div>
<div class="c z" style="left:270px">以后告诉你</div>
<div class="c z" style="left:390px">没有</div>
<div class="c z" style="left:510px">以后告诉你</div>
<div class="c z" style="left:630px">遵义医学院</div>
<div class="c z" style="left:750px">以后告诉你</div>
<div class="c z" style="left:870px">以后告诉你</div>
<div class="c z" style="left:990px">以后告诉你</div>
<div class="c" style="left:1110px">test_07</div>
<div class="c z" style="left:1230px">我希望自己不是这里的</div>
<div class="c" style="left:1350px">baihe.com</div>
<div class="c z" style="left:1470px">本科</div>
<div class="c z" style="left:1590px">以后告诉你</div>
<div class="c z" style="left:1710px">7分</div>
</div>
<div class="row" style="top:75px"><div class="rn">3</div>
<div class="c" style="left:30px">ObjectId(&quot;582b837ad</div>
<div class="c" style="left:150px">25</div>
<div class="c z" style="left:270px">照顾者型</div>
<div class="c z" style="left:390px">没有</div>
<div class="c z" style="left:510px">视情况而定</div>
<div class="c z" style="left:630px">以后告诉你</div>
<div class="c z" style="left:750px">其它</div>
<div class="c z" style="left:870px">私营企业</div>
<div class="c z" style="left:990px">能做几样可口的小菜</div>
<div class="c" style="left:1110px">test_07</div>
<div class="c z" style="left:1230px">花堪折时直需折，莫待</div>
<div class="c" style="left:1350px">baihe.com</div>
<div class="c z" style="left:1470px">本科</div>
<div class="c z" style="left:1590px">彼此相依相偎</div>
<div class="c z" style="left:1710px">5分</div>
</div>
<div class="row alt" style="top:100px"><div class="rn">4</div>
<div class="c" style="left:30px">ObjectId(&quot;582b837ad</div>
<div class="c" style="left:150px">26</div>
<div class="c z" style="left:270px">记者型</div>
<div class="c z" style="left:390px">以后告诉你</div>
<div class="c z" style="left:510px">以后告诉你</div>
<div class="c z" style="left:630px">以后告诉你</div>
<div class="c z" style="left:750px">以后告诉你</div>
<div class="c z" style="left:870px">以后告诉你</div>
<div class="c z" style="left:990px">以后告诉你</div>
<div class="c" style="left:1110px">test_07</div>
<div class="c z" style="left:1230px">！！！！！！！！！！</div>
<div class="c" style="left:1350px">baihe.com</div>
<div class="c z" style="left:1470px">中专/职高/技校</div>
<div class="c z" style="left:1590px">以后告诉你</div>
<div class="c z" style="left:1710px">以</div>
</div>
<div class="row" style="top:125px"><div class="rn">5</div>
<div class="c" style="left:30px">ObjectId(&quot;582b837ad</div>
<div class="c" style="left:150px">24</div>
<div class="c z" style="left:270px">以后告诉你</div>
<div class="c z" style="left:390px">以后告诉你</div>
<div class="c z" style="left:510px">以后告诉你</div>
<div class="c z" style="left:630px">以后告诉你</div>
<div class="c z" style="left:750px">以后告诉你</div>
<div class="c z" style="left:870px">以后告诉你</div>
<div class="c z" style="left:990px">以后告诉你</div>
<div class="c" style="left:1110px">test_07</div>
<div class="c z" style="left:1230px">在百合，我希望找到一</div>
<div class="c" style="left:1350px">baihe.com</div>
<div class="c z" style="left:1470px">高中</div>
<div class="c z" style="left:1590px">以后告诉你</div>
<div class="c z" style="left:1710px">以</div>
</div>
<div class="row alt" style="top:150px"><div class="rn">6</div>
<div class="c" style="left:30px">ObjectId(&quot;582b837ad</div>
<div class="c" style="left:150px">21</div>
<div class="c z" style="left:270px">记者型</div>
<div class="c z" style="left:390px">没有</div>
<div class="c z" style="left:510px">想</div>
<div class="c z" style="left:630px">以后告诉你</div>
<div class="c z" style="left:750px">计算机/网络</div>
<div class="c z" style="left:870px">私营企业</div>
<div class="c z" style="left:990px">不太会，但愿为心爱的</div>
<div class="c" style="left:1110px">test_07</div>
<div class="c z" style="left:1230px">希望碰到合适的，对方</div>
<div class="c" style="left:1350px">baihe.com</div>
<div class="c z" style="left:1470px">中专/职高/技校</div>
<div class="c z" style="left:1590px">一起打游戏或者一起看</div>
<div class="c z" style="left:1710px">以</div>
</div>
<div class="row" style="top:175px"><div class="rn">7</div>
<div class="c" style="left:30px">ObjectId(&quot;582b837ad</div>
<div class="c" style="left:150px">25</div>
<div class="c z" style="left:270px">哲学家型</div>
<div class="c z" style="left:390px">没有</div>
<div class="c z" style="left:510px">视情况而定</div>
<div class="c z" style="left:630px">泰山医学院</div>
<div class="c z" style="left:750px">健康/医疗</div>
<div class="c z" style="left:870px">私营企业</div>
<div class="c z" style="left:990px">能做几样可口的小菜</div>
<div class="c" style="left:1110px">test_07</div>
<div class="c z" style="left:1230px">大家好，我是个传统的</div>
<div class="c" style="left:1350px">baihe.com</div>
<div class="c z" style="left:1470px">本科</div>
<div class="c z" style="left:1590px">共赴浪漫之旅</div>
<div class="c z" style="left:1710px">8分</div>
</div>
<div class="row alt" style="top:200px"><div class="rn">8</div>
<div class="c" style="left:30px">ObjectId(&quot;582b837bd</div>
<div class="c" style="left:150px">25</div>
<div class="c z" style="left:270px">表演者型</div>
<div class="c z" style="left:390px">以后告诉你</div>
<div class="c z" style="left:510px">想</div>
<div class="c z" style="left:630px">以后告诉你</div>
<div class="c z" style="left:750px">以后告诉你</div>
<div class="c z" style="left:870px">国有企业</div>
<div class="c z" style="left:990px">以后告诉你</div>
<div class="c" style="left:1110px">test_07</div>
<div class="c z" style="left:1230px">愿得一人心，白首不分</div>
<div class="c" style="left:1350px">baihe.com</div>
<div class="c z" style="left:1470px">本科</div>
<div class="c z" style="left:1590px">以后告诉你</div>
<div class="c z" style="left:1710px">以</div>
</div>
<div class="row" style="top:225px"><div class="rn">9</div>
<div class="c" style="left:30px">ObjectId(&quot;582b837bd</div>
<div class="c" style="left:150px">25</div>
<div class="c z" style="left:270px">公务员型</div>
<div class="c z" style="left:390px">没有</div>
<div class="c z" style="left:510px">视情况而定</div>
<div class="c z" style="left:630px">以后告诉你</div>
<div class="c z" style="left:750px">以后告诉你</div>
<div class="c z" style="left:870px">私营企业</div>
<div class="c z" style="left:990px">不太会，但愿为心爱的</div>
<div class="c" style="left:1110px">test_07</div>
<div class="c z" style="left:1230px">愿得一人心、白首不分</div>
<div class="c" style="left:1350px">baihe.com</div>
<div class="c z" style="left:1470px">大专</div>
<div class="c z" style="left:1590px">共赴浪漫之旅</div>
<div class="c z" style="left:1710px">以</div>
</div>
<div class="row alt" style="top:250px"><div class="rn">10</div>
<div class="c" style="left:30px">ObjectId(&quot;582b837bd</div>
<div class="c" style="left:150px">21</div>
<div class="c z" style="left:270px">以后告诉你</div>
<div class="c z" style="left:390px">以后告诉你</div>
<div class="c z" style="left:510px">以后告诉你</div>
<div class="c z" style="left:630px">以后告诉你</div>
<div class="c z" style="left:750px">以后告诉你</div>
<div class="c z" style="left:870px">以后告诉你</div>
<div class="c z" style="left:990px">以后告诉你</div>
<div class="c" style="left:1110px">test_07</div>
<div class="c z" style="left:1230px">大家好，很高兴来到这</div>
<div class="c" style="left:1350px">baihe.com</div>
<div class="c z" style="left:1470px">初中</div>
<div class="c z" style="left:1590px">以后告诉你</div>
<div class="c z" style="left:1710px">以</div>
</div>
<div class="row" style="top:275px"><div class="rn">11</div>
<div class="c" style="left:30px">ObjectId(&quot;582b837bd</div>
<div class="c" style="left:150px">25</div>
<div class="c z" style="left:270px">艺术家型</div>
<div class="c z" style="left:390px">没有</div>
<div class="c z" style="left:510px">以后告诉你</div>
<div class="c z" style="left:630px">以后告诉你</div>
<div class="c z" style="left:750px">以后告诉你</div>
<div class="c z" style="left:870px">以后告诉你</div>
<div class="c z" style="left:990px">以后告诉你</div>
<div class="c" style="left:1110px">test_07</div>
<div class="c z" style="left:1230px">认真的找一个男朋友，</div>
<div class="c" style="left:1350px">baihe.com</div>
<div class="c z" style="left:1470px">高中</div>
<div class="c z" style="left:1590px">以后告诉你</div>
<div class="c z" style="left:1710px">以</div>
</div>
<div class="row alt" style="top:300px"><div class="rn">12</div>
<div class="c" style="left:30px">ObjectId(&quot;582b837cd</div>
<div class="c" style="left:150px">24</div>
<div class="c z" style="left:270px">哲学家型</div>
<div class="c z" style="left:390px">没有</div>
<div class="c z" style="left:510px">以后告诉你</div>
<div class="c z" style="left:630px">以后告诉你</div>
<div class="c z" style="left:750px">金融/证券/保险</div>
<div class="c z" style="left:870px">以后告诉你</div>
<div class="c z" style="left:990px">以后告诉你</div>
<div class="c" style="left:1110px">test_07</div>
<div class="c z" style="left:1230px">天然呆傻，脾气倔，痴</div>
<div class="c" style="left:1350px">baihe.com</div>
<div class="c z" style="left:1470px">大专</div>
<div class="c z" style="left:1590px">以后告诉你</div>
<div class="c z" style="left:1710px">以</div>
</div>
<div class="row" style="top:325px"><div class="rn">13</div>
<div class="c" style="left:30px">ObjectId(&quot;582b837cd</div>
<div class="c" style="left:150px">25</div>
<div class="c z" style="left:270px">以后告诉你</div>
<div class="c z" style="left:390px">没有</div>
<div class="c z" style="left:510px">以后告诉你</div>
<div class="c z" style="left:630px">以后告诉你</div>
<div class="c z" style="left:750px">以后告诉你</div>
<div class="c z" style="left:870px">以后告诉你</div>
<div class="c z" style="left:990px">不太会，但愿为心爱的</div>
<div class="c" style="left:1110px">test_07</div>
<div class="c z" style="left:1230px">找个对象肿么就辣么难</div>
<div class="c" style="left:1350px">baihe.com</div>
<div class="c z" style="left:1470px">本科</div>
<div class="c z" style="left:1590px">以后告诉你</div>
<div class="c z" style="left:1710px">2分</div>
</div>
<div class="row alt" style="top:350px"><div class="rn">14</div>
<div class="c" style="left:30px">ObjectId(&quot;582b837cd</div>
<div class="c" style="left:150px">25</div>
<div class="c z" style="left:270px">以后告诉你</div>
<div class="c z" style="left:390px">没有</div>
<div class="c z" style="left:510px">以后告诉你</div>
<div class="c z" style="left:630px">以后告诉你</div>
<div class="c z" style="left:750px">汽车</div>
<div class="c z" style="left:870px">私营企业</div>
<div class="c z" style="left:990px">以后告诉你</div>
<div class="c" style="left:1110px">test_07</div>
<div class="c z" style="left:1230px">Hello,我是一个喜欢养</div>
<div class="c" style="left:1350px">baihe.com</div>
<div class="c z" style="left:1470px">大专</div>
<div class="c z" style="left:1590px">以后告诉你</div>
<div class="c z" style="left:1710px">以</div>
</div>
<div class="row" style="top:375px"><div class="rn">15</div>
<div class="c" style="left:30px">ObjectId(&quot;582b837dd</div>
<div class="c" style="left:150px">24</div>
<div class="c z" style="left:270px">以后告诉你</div>
<div class="c z" style="left:390px">以后告诉你</div>
<div class="c z" style="left:510px">以后告诉你</div>
<div class="c z" style="left:630px">以后告诉你</div>
<div class="c z" style="left:750px">以后告诉你</div>
<div class="c z" style="left:870px">以后告诉你</div>
<div class="c z" style="left:990px">以后告诉你</div>
<div class="c" style="left:1110px">test_07</div>
<div class="c z" style="left:1230px">大家好，很高兴来到这</div>
<div class="c" style="left:1350px">baihe.com</div>
<div class="c z" style="left:1470px">大专</div>
<div class="c z" style="left:1590px">以后告诉你</div>
<div class="c z" style="left:1710px">以</div>
</div>
<div class="row alt" style="top:400px"><div class="rn">16</div>
<div class="c" style="left:30px">ObjectId(&quot;582b837dd</div>
<div class="c" style="left:150px">24</div>
<div class="c z" style="left:270px">以后告诉你</div>
<div class="c z" style="left:390px">没有</div>
<div class="c z" style="left:510px">视情况而定</div>
<div class="c z" style="left:630px">成都理工大学广播影视</div>
<div class="c z" style="left:750px">计算机/网络</div>
<div class="c z" style="left:870px">国有企业</div>
<div class="c z" style="left:990px">能做几样可口的小菜</div>
<div class="c" style="left:1110px">test_07</div>
<div class="c z" style="left:1230px">大家好，很高兴来到这</div>
<div class="c" style="left:1350px">baihe.com</div>
<div class="c z" style="left:1470px">大专</div>
<div class="c z" style="left:1590px">牵手漫步在公园</div>
<div class="c z" style="left:1710px">7分</div>
</div>
<div class="row" style="top:425px"><div class="rn">17</div>
<div class="c" style="left:30px">ObjectId(&quot;582b837dd</div>
<div class="c" style="left:150px">25</div>
<div class="c z" style="left:270px">哲学家型</div>
<div class="c z" style="left:390px">没有</div>
<div class="c z" style="left:510px">以后告诉你</div>
<div class="c z" style="left:630px">以后告诉你</div>
<div class="c z" style="left:750px">其它</div>
<div class="c z" style="left:870px">以后告诉你</div>
<div class="c z" style="left:990px">以后告诉你</div>
<div class="c" style="left:1110px">test_07</div>
<div class="c z" style="left:1230px">等待，只为与你相遇，</div>
<div class="c" style="left:1350px">baihe.com</div>
<div class="c z" style="left:1470px">大专</div>
<div class="c z" style="left:1590px">以后告诉你</div>
<div class="c z" style="left:1710px">5分</div>
</div>
<div class="row alt" style="top:450px"><div class="rn">18</div>
<div class="c" style="left:30px">ObjectId(&quot;582b837dd</div>
<div class="c" style="left:150px">26</div>
<div class="c z" style="left:270px">照顾者型</div>
<div class="c z" style="left:390px">没有</div>
<div class="c z" style="left:510px">想</div>
<div class="c z" style="left:630px">中国地大（武汉）</div>
<div class="c z" style="left:750px">其它</div>
<div class="c z" style="left:870px">事业单位</div>
<div class="c z" style="left:990px">能做几样可口的小菜</div>
<div class="c" style="left:1110px">test_07</div>
<div class="c z" style="left:1230px">大家好，我是一个独立</div>
<div class="c" style="left:1350px">baihe.com</div>
<div class="c z" style="left:1470px">本科</div>
<div class="c z" style="left:1590px">共赴浪漫之旅</div>
<div class="c z" style="left:1710px">7分</div>
</div>
<div class="row" style="top:475px"><div class="rn">19</div>
<div class="c" style="left:30px">ObjectId(&quot;582b837dd</div>
<div class="c" style="left:150px">26</div>
<div class="c z" style="left:270px">主人型</div>
<div class="c z" style="left:390px">以后告诉你</div>
<div class="c z" style="left:510px">想</div>
<div class="c z" style="left:630px">山东水利职业学院</div>
<div class="c z" style="left:750px">房地产 建筑业</div>
<div class="c z" style="left:870px">私营企业</div>
<div class="c z" style="left:990px">能做几样可口的小菜</div>
<div class="c" style="left:1110px">test_07</div>
<div class="c z" style="left:1230px">你们好：我是滕王，不</div>
<div class="c" style="left:1350px">baihe.com</div>
<div class="c z" style="left:1470px">大专</div>
<div class="c z" style="left:1590px">牵手漫步在公园</div>
<div class="c z" style="left:1710px">5分</div>
</div>
<div class="row alt" style="top:500px"><div class="rn">20</div>
<div class="c" style="left:30px">ObjectId(&quot;582b837dd</div>
<div class="c" style="left:150px">22</div>
<div class="c z" style="left:270px">表演者型</div>
<div class="c z" style="left:390px">没有</div>
<div class="c z" style="left:510px">想</div>
<div class="c z" style="left:630px">四川省其他</div>
<div class="c z" style="left:750px">营销/市场/策划</div>
<div class="c z" style="left:870px">私营企业</div>
<div class="c z" style="left:990px">能做几样可口的小菜</div>
<div class="c" style="left:1110px">test_07</div>
<div class="c z" style="left:1230px">我希望自己不是这里的</div>
<div class="c" style="left:1350px">baihe.com</div>
<div class="c z" style="left:1470px">中专/职高/技校</div>
<div class="c z" style="left:1590px">牵手漫步在公园</div>
<div class="c z" style="left:1710px">5分</div>
</div>
</div>
  <div id="hscroll" class="a">
    <div class="a" style="left:6px;top:5px;width:0;height:0;border-top:4px solid transparent;border-bottom:4px solid transparent;border-right:4px solid #999"></div>
    <div class="a" style="left:17px;top:2px;width:350px;height:13px;background:#bcbcbc;border:1px solid #adadad"></div>
  </div>
</div>

<div id="status" class="a">
  <div class="t" style="left:5px">Copyright ©</div>
  <div class="t" style="left:77px">mongobooster.com</div>
  <div class="t" style="left:196px">version 1.1.1 (</div>
  <svg class="a" style="left:279px;top:8px" width="14" height="17" viewBox="0 0 14 17"><defs><radialGradient id="bl" cx="0.45" cy="0.35" r="0.6"><stop offset="0" stop-color="#fffdf0"/><stop offset="0.5" stop-color="#f8ee90"/><stop offset="1" stop-color="#f0d820"/></radialGradient><linearGradient id="bb" x1="0" x2="1"><stop offset="0" stop-color="#50545a"/><stop offset="0.5" stop-color="#c8ccd0"/><stop offset="1" stop-color="#3a3e44"/></linearGradient></defs><path d="M7 0.6a5.7 5.7 0 0 0-3.4 10.3l0.4 1.3h6l0.4-1.3A5.7 5.7 0 0 0 7 0.6z" fill="url(#bl)" stroke="#b8a010" stroke-width="0.7"/><path d="M4.2 12.2h5.6v2.3q0 1.6-1.6 1.6H5.8q-1.6 0-1.6-1.6z" fill="url(#bb)"/></svg>
  <div class="t" style="left:298px;top:9px">3.1.5 available</div>
  <div class="t" style="left:382px">)</div>
  <div class="t" style="left:396px;color:#f01010;font-weight:bold">Paid-for features, 8 days left</div>
  <svg class="a" style="left:1761px;top:5px" width="17" height="17" viewBox="0 0 17 17"><path d="M3 1.5Q3 0.6 4 0.6h10.5q1.3 0 1.3 1.3t-1.3 1.3H13v8.5H2.5z" fill="#f4f7fa" stroke="#8a9096" stroke-width="0.8"/><path d="M0.6 11.5q0-1.3 1.3-1.3h9.6v4.6H1.9q-1.3 0-1.3-1.3z" fill="#dcdfe2" stroke="#8a9096" stroke-width="0.8"/><path d="M4.5 3.5h6M4.5 5.5h6" stroke="#dde6f0" stroke-width="0.8"/><circle cx="9.3" cy="8.8" r="3.1" fill="#dcebf8" stroke="#30363c" stroke-width="1.1"/><path d="M11.5 11.2l3.6 3.6" stroke="#9a6a20" stroke-width="2.2" stroke-linecap="round"/></svg>
  <div class="t" style="left:1781px;top:6px">Show Log</div>
  <div class="t" style="left:1846px;top:6px;color:#222">05:02:21 pm</div>
</div>
<div id="taskbar" class="a">
  <div class="a" style="left:47px;top:0;width:344px;height:4px;background:#303030"></div>
  <div class="a" style="left:735px;top:0;width:48px;height:4px;background:#33363a"></div>
</div>

<!-- CPU widget -->
<div class="a" style="left:0;top:0;width:1907px;height:1044px;opacity:0.94;pointer-events:none">
<div class="a" style="left:1800px;top:510px;width:74px;height:42px;border-radius:9px;background:linear-gradient(#303238,#1e2024)"></div>
<div class="a" style="left:1757px;top:501px;width:59px;height:59px;border-radius:50%;background:radial-gradient(circle at 50% 60%,#3e4046,#2a2c31 70%,#222327)"></div>
<div class="a" style="left:1761px;top:505px;width:52px;height:52px;border-radius:50%;border:2px solid #f2de00;background:radial-gradient(circle at 50% 75%,#55575d,#34363b 60%,#2c2e33)"></div>
</div>
<div class="t" style="left:1771px;top:518px;font-size:21px;line-height:22px;color:#f4f4f4;letter-spacing:2px">61</div>
<div class="t" style="left:1797px;top:526px;font-size:11px;line-height:12px;color:#fff;font-weight:bold">%</div>
<div class="t" style="left:1823px;top:517px;font-size:11.5px;line-height:13px;color:#50d050">49°C</div>
<svg class="a" style="left:1855px;top:515px" width="11" height="15" viewBox="0 0 11 15"><path d="M5.5 0.5C9 3 10.5 6 10 9c-0.5 3-3 4-4.5 4.5L4 14.5 3.5 13C1.5 12 0.5 10 1 7.5 1.5 4.5 3.5 2 5.5 0.5z" fill="#44c030"/><path d="M5.5 3L4.5 13" stroke="#2a8a20" stroke-width="0.8"/></svg>
<div class="t" style="left:1820px;top:534px;font-size:11px;line-height:13px;color:#a8b2be">CPU温度</div>
<!-- Network widget -->
<div class="a" style="left:1790px;top:954px;width:113px;height:38px;border-radius:19px;box-shadow:0 3px 6px rgba(0,0,0,0.25)"></div>
<div class="a" style="left:1790px;top:951px;width:113px;height:40px;border-radius:20px;border:1px solid #c4c4c4;background:linear-gradient(#f6f6f6,#dedede)"></div>
<div class="a" style="left:1775px;top:945px;width:50px;height:50px;border-radius:50%;background:linear-gradient(#fafafa,#d4d4d4);border:1px solid #b0b0b0;box-shadow:0 3px 6px rgba(0,0,0,0.3)"></div>
<div class="a" style="left:1778px;top:948px;width:44px;height:44px;border-radius:50%;overflow:hidden;background:#48c860">
  <div class="a" style="left:0;top:0;width:44px;height:17px;background:linear-gradient(#1b7048,#218a55)"></div>
  <div class="a" style="left:16px;top:3px;width:6px;height:2px;border-radius:50%;background:rgba(255,255,255,0.6)"></div><div class="a" style="left:12px;top:5px;width:2px;height:2px;border-radius:50%;background:rgba(255,255,255,0.6)"></div><div class="a" style="left:0;top:0;width:44px;height:17px;background:radial-gradient(ellipse at 50% 0%,rgba(255,255,255,0.25),rgba(255,255,255,0) 70%)"></div>
</div>
<div class="t" style="left:1785px;top:962px;font-size:13px;line-height:14px;color:#fff">61<span style="margin-left:2px">%</span></div>
<svg class="a" style="left:1827px;top:959px" width="8" height="24" viewBox="0 0 8 24"><path d="M4 0.5L7.5 4H5v5H3V4H0.5z" fill="#e84a2a"/><path d="M4 23.5L7.5 20H5v-5H3v5H0.5z" fill="#24a040"/></svg>
<div class="t" style="left:1842px;top:958px;font-size:10px;line-height:12px;color:#111;letter-spacing:-0.3px">58.1K/s</div>
<div class="t" style="left:1847px;top:972px;font-size:10px;line-height:12px;color:#111;letter-spacing:-0.3px">8.3K/s</div>
<div class="a" style="left:1879px;top:963px;width:17px;height:17px;border-radius:50%;background:radial-gradient(circle at 50% 35%,#6aaaf0,#2a72d8)"></div>
<svg class="a" style="left:1882px;top:966px" width="11" height="11" viewBox="0 0 11 11"><path d="M5.5 1v9M1 5.5h9" stroke="#fff" stroke-width="2"/></svg>
<div class="a" style="left:1889px;top:961px;width:8px;height:8px;border-radius:50%;background:#e02828"></div>

</body></html>
